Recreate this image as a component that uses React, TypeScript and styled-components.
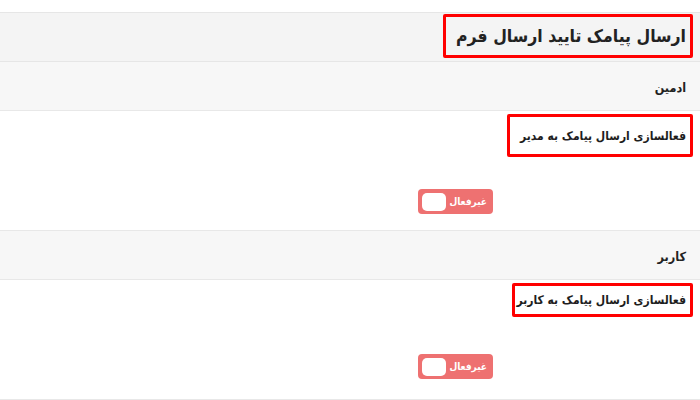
import { useState } from "react";
import styled, { createGlobalStyle } from "styled-components";

const GlobalStyle = createGlobalStyle`
    html, body {
        margin: 0;
        padding: 0;
        background: #fff;
    }
    body {
        font-family: "DejaVu Sans Condensed", "DejaVu Sans", sans-serif;
        font-stretch: condensed;
        color: #2b2b2b;
    }
`;

const Page = styled.div`
    direction: rtl;
    width: 700px;
    height: 400px;
    overflow: hidden;
    padding-top: 12px;
    box-sizing: border-box;
`;

const TitleBar = styled.div`
    background: #f4f4f4;
    border-top: 1px solid #e6e6e6;
    border-bottom: 1px solid #e6e6e6;
    height: 50px;
    padding: 1px 7px 0 0;
    box-sizing: border-box;
`;

const Marked = styled.div<{ $h: number; $padL: number }>`
    display: inline-flex;
    align-items: center;
    height: ${(p) => p.$h}px;
    box-sizing: border-box;
    border: 3px solid #f00;
    border-radius: 2px;
    padding: 0 4px 0 ${(p) => p.$padL}px;
`;

const Title = styled.h1`
    margin: 0;
    font-size: 17.5px;
    font-weight: bold;
    color: #222;
`;

const SectionHead = styled.div`
    background: #f7f7f7;
    border-bottom: 1px solid #e8e8e8;
    height: 49px;
    box-sizing: border-box;
    display: flex;
    align-items: center;
    padding: 2px 14px 0 0;
    font-size: 12.5px;
    font-weight: bold;
    color: #222;
`;

const SectionBody = styled.div<{ $gap: number }>`
    height: 120px;
    box-sizing: border-box;
    padding: 3px 7px 0 0;
    border-bottom: 1px solid #e8e8e8;
    display: flex;
    flex-direction: column;
    align-items: flex-start;
    gap: ${(p) => p.$gap}px;
`;

const Label = styled.span`
    font-size: 12px;
    font-weight: bold;
    color: #1e1e1e;
`;

const ToggleRow = styled.div`
    margin-right: 200px;
`;

const Toggle = styled.button<{ $on: boolean }>`
    direction: rtl;
    width: 75px;
    height: 25px;
    border: none;
    border-radius: 4px;
    background: ${(p) => (p.$on ? "#5cb85c" : "#ee7171")};
    display: flex;
    align-items: center;
    flex-direction: ${(p) => (p.$on ? "row-reverse" : "row")};
    justify-content: space-between;
    padding: 0 6px 0 4px;
    cursor: pointer;
    font-family: inherit;
    font-stretch: condensed;
    font-size: 10px;
    font-weight: bold;
    color: #fff;
`;

const Knob = styled.span`
    width: 24px;
    height: 18px;
    border-radius: 5px;
    background: #fff;
`;

function SmsToggle() {
    const [on, setOn] = useState(false);
    return (
        <ToggleRow>
            <Toggle $on={on} onClick={() => setOn(!on)}>
                <span>{on ? "فعال" : "غیرفعال"}</span>
                <Knob />
            </Toggle>
        </ToggleRow>
    );
}

export default function App() {
    return (
        <Page>
            <GlobalStyle />
            <TitleBar>
                <Marked $h={44} $padL={10}>
                    <Title>ارسال پیامک تایید ارسال فرم</Title>
                </Marked>
            </TitleBar>

            <SectionHead>ادمین</SectionHead>
            <SectionBody $gap={32}>
                <Marked $h={43} $padL={10}>
                    <Label>فعالسازی ارسال پیامک به مدیر</Label>
                </Marked>
                <SmsToggle />
            </SectionBody>

            <SectionHead>کاربر</SectionHead>
            <SectionBody $gap={37}>
                <Marked $h={34} $padL={1}>
                    <Label>فعالسازی ارسال پیامک به کاربر</Label>
                </Marked>
                <SmsToggle />
            </SectionBody>
        </Page>
    );
}
